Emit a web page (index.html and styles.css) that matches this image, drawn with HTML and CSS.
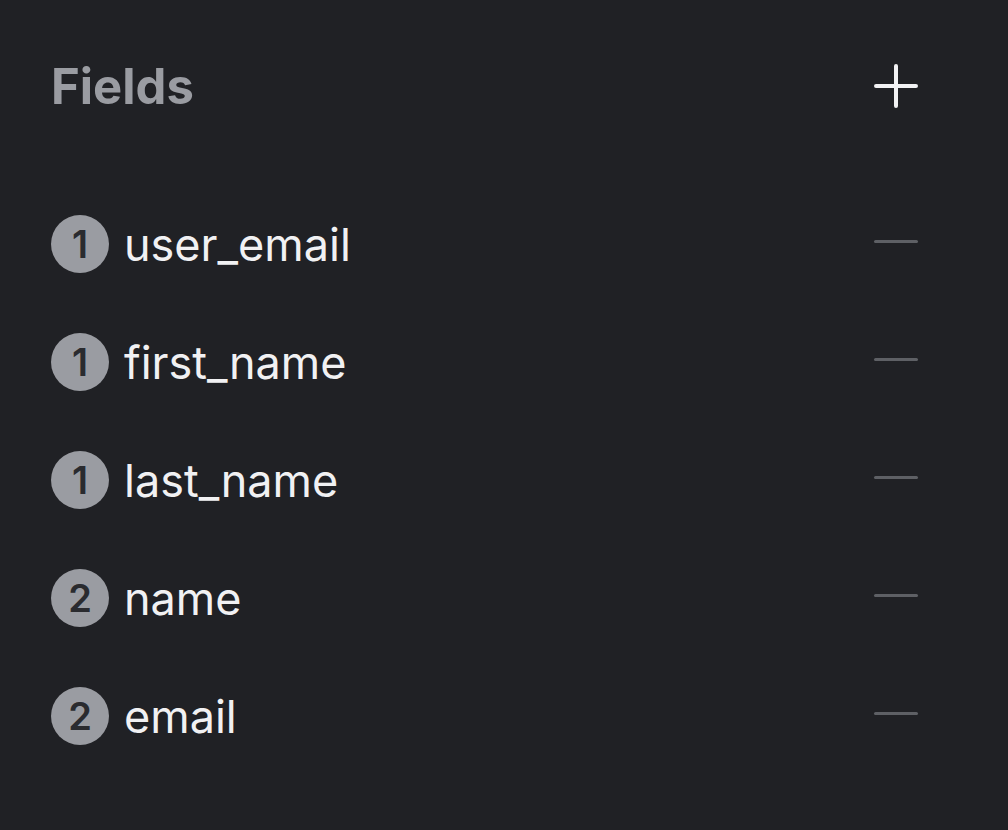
FILE: index.html
```html
<!DOCTYPE html>
<html>
<head>
<meta charset="utf-8">
<link rel="stylesheet" href="styles.css">
</head>
<body>
<div class="panel">
  <div class="header">
    <h1 class="title">Fields</h1>
    <button class="add" aria-label="Add field">
      <svg width="44" height="44" viewBox="0 0 44 44"><path d="M22 2V42M2 22H42" stroke="#f2f2f4" stroke-width="4" stroke-linecap="round"/></svg>
    </button>
  </div>
  <ul class="list">
    <li class="row"><span class="badge">1</span><span class="name">user_email</span><span class="remove"></span></li>
    <li class="row"><span class="badge">1</span><span class="name">first_name</span><span class="remove"></span></li>
    <li class="row"><span class="badge">1</span><span class="name">last_name</span><span class="remove"></span></li>
    <li class="row"><span class="badge">2</span><span class="name">name</span><span class="remove"></span></li>
    <li class="row"><span class="badge">2</span><span class="name">email</span><span class="remove"></span></li>
  </ul>
</div>
</body>
</html>
```
FILE: styles.css
```css
html, body {
  margin: 0;
  padding: 0;
  background: #202125;
  height: 100%;
}
body {
  font-family: Inter, "Noto Sans", sans-serif;
  color: #f1f1f3;
}
.panel {
  padding: 64px 90px 0 51px;
}
.header {
  display: flex;
  align-items: center;
  justify-content: space-between;
  height: 46px;
}
.title {
  margin: 0;
  font-size: 49px;
  font-weight: 700;
  color: #9a9ca2;
  line-height: 46px;
}
.add {
  background: none;
  border: 0;
  padding: 0;
  width: 44px;
  height: 44px;
  display: flex;
  margin-top: -2px;
}
.list {
  list-style: none;
  margin: 0;
  padding: 0;
  margin-top: 75px;
}
.row {
  display: flex;
  align-items: center;
  height: 118px;
}
.badge {
  width: 58px;
  height: 58px;
  border-radius: 50%;
  background: #9a9ca2;
  color: #2a2b2f;
  font-size: 38px;
  font-weight: 600;
  display: flex;
  align-items: center;
  justify-content: center;
  flex: none;
}
.name {
  flex: 1;
  margin-left: 15px;
  font-size: 45px;
  font-weight: 400;
  color: #f1f1f3;
}
.remove {
  width: 44px;
  height: 3px;
  border-radius: 2px;
  background: #5e6065;
  flex: none;
  margin-bottom: 6px;
}
```
